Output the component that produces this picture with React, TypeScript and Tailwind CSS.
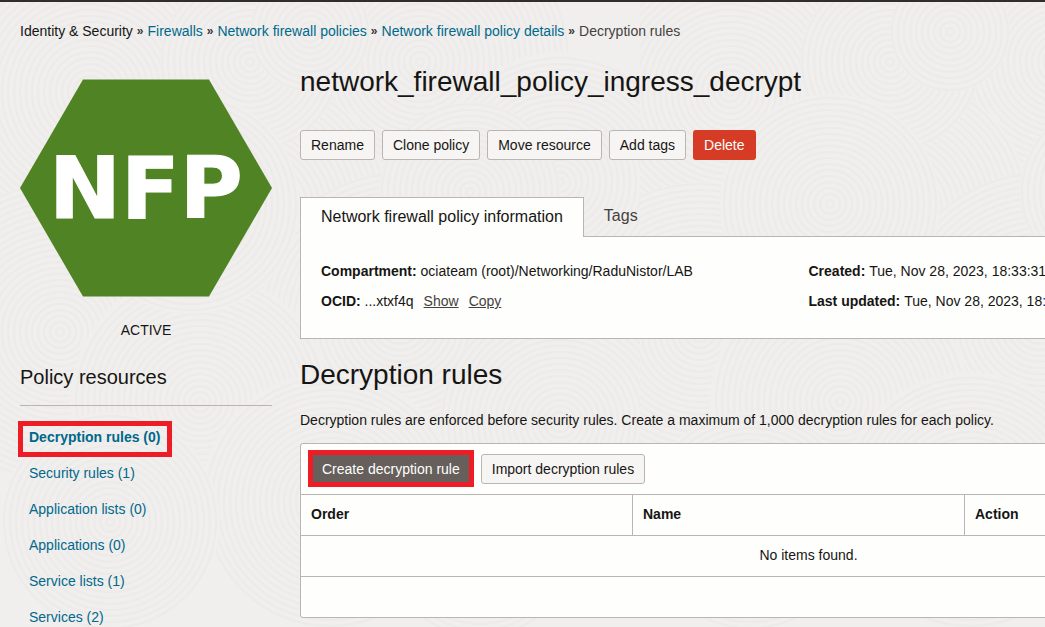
import type { ReactNode } from "react";

const crumbs = ["Firewalls", "Network firewall policies", "Network firewall policy details"];

const resources = [
  { label: "Decryption rules (0)", selected: true },
  { label: "Security rules (1)" },
  { label: "Application lists (0)" },
  { label: "Applications (0)" },
  { label: "Service lists (1)" },
  { label: "Services (2)" },
];

// Ring centres and radii inside one 640px tile; later discs cover earlier ones.
const discs: [number, number, number][] = [
  [90, 90, 150], [420, 60, 150], [250, 210, 140], [560, 180, 130], [60, 330, 150],
  [400, 320, 150], [200, 400, 130], [560, 420, 120], [330, 500, 130], [110, 520, 110],
  [480, 540, 95], [250, 60, 90], [190, 202, 110], [470, 190, 90], [310, 30, 60],
];

const rings = Array.from({ length: 25 }, (_, i) => 4 + i * 6);

function Texture() {
  return (
    <svg className="pointer-events-none absolute inset-0 -z-10 h-full w-full" aria-hidden="true">
      <defs>
        <pattern id="rings" width="640" height="640" patternUnits="userSpaceOnUse">
          <rect width="640" height="640" fill="#f0efed" />
          {discs.map(([cx, cy, r]) => (
            <g key={`${cx}-${cy}`} fill="none" stroke="#ecebe9" strokeWidth="2">
              <circle cx={cx} cy={cy} r={r} fill="#f0efed" stroke="none" />
              {rings
                .filter((radius) => radius < r)
                .map((radius) => (
                  <circle key={radius} cx={cx} cy={cy} r={radius} />
                ))}
            </g>
          ))}
        </pattern>
      </defs>
      <rect width="100%" height="100%" fill="url(#rings)" />
    </svg>
  );
}

function Button({ children }: { children: ReactNode }) {
  return (
    <button
      type="button"
      className="h-[30px] rounded-[3px] border border-[#bab5b0] bg-[#f7f5f4] px-[10px] text-[#161513]"
    >
      {children}
    </button>
  );
}

function Field({ label, children }: { label: string; children: ReactNode }) {
  return (
    <div className="h-[30px] whitespace-nowrap">
      <dt className="inline font-bold">{label}</dt> <dd className="inline">{children}</dd>
    </div>
  );
}

function Separator() {
  return (
    <span aria-hidden="true" className="mx-1 text-xs font-bold leading-5 text-[#3a3734]">
      »
    </span>
  );
}

export default function App() {
  return (
    <div className="relative isolate min-h-screen overflow-x-clip border-t-2 border-[#312d2a] bg-[#f0efed] px-5 pb-[9px] font-['Liberation_Sans',Arial,sans-serif] text-sm leading-5 text-[#161513]">
      <Texture />

      <nav aria-label="Breadcrumb" className="flex pt-[19px]">
        <span>Identity &amp; Security</span>
        <Separator />
        {crumbs.map((crumb) => (
          <span key={crumb} className="flex">
            <a href="#" className="text-[#00688c]">
              {crumb}
            </a>
            <Separator />
          </span>
        ))}
        <span className="text-[#45413e]">Decryption rules</span>
      </nav>

      <div className="flex items-start gap-7">
        <aside className="w-[252px] shrink-0 pt-[38px]">
          <div className="grid place-items-center">
            <svg viewBox="0 0 252 218" className="col-start-1 row-start-1 w-full" aria-hidden="true">
              <path d="M63 .5H189L252 109L189 217.5H63L0 109Z" fill="#4f8323" />
            </svg>
            <span className="col-start-1 row-start-1 font-['DejaVu_Sans',sans-serif] text-[86px] font-bold leading-[88px] text-white [-webkit-text-stroke:1px_white]">
              NFP
            </span>
          </div>
          <p className="pt-[23px] text-center">ACTIVE</p>
          <h2 className="border-b border-[#bab5b0] pb-4 pt-[25px] text-xl leading-6">Policy resources</h2>
          <ul className="pt-[13px]">
            {resources.map(({ label, selected }) => (
              <li key={label} className="relative flex h-9 items-center pl-[9px]">
                <a href="#" className={selected ? "font-bold text-[#00688c]" : "text-[#00688c]"}>
                  {label}
                </a>
                {selected && (
                  <span className="pointer-events-none absolute -left-0.5 top-0.5 h-9 w-[154px] border-[5px] border-[#ee1c25]" />
                )}
              </li>
            ))}
          </ul>
        </aside>

        <main className="min-w-[1017px] flex-1 pt-[25px]">
          <h1 className="text-[28px] leading-8">network_firewall_policy_ingress_decrypt</h1>

          <div className="flex gap-[7px] pt-8">
            <Button>Rename</Button>
            <Button>Clone policy</Button>
            <Button>Move resource</Button>
            <Button>Add tags</Button>
            <button type="button" className="h-[30px] rounded-[3px] bg-[#d63b25] px-[11px] text-white">
              Delete
            </button>
          </div>

          <div role="tablist" className="flex pt-[37px] text-base leading-6">
            <button
              type="button"
              role="tab"
              aria-selected="true"
              className="relative -mb-px h-10 border border-b-0 border-[#bab5b0] bg-[#fefefc] px-5 pb-px"
            >
              Network firewall policy information
            </button>
            <button type="button" role="tab" aria-selected="false" className="h-[38px] px-5 text-[#45413e]">
              Tags
            </button>
          </div>
          <dl className="grid grid-cols-2 border border-[#bab5b0] bg-[#fefefc] px-5 pb-[17px] pt-6">
            <div>
              <Field label="Compartment:">ociateam (root)/Networking/RaduNistor/LAB</Field>
              <Field label="OCID:">
                ...xtxf4q
                <button type="button" className="ml-[10px] text-[#45413e] underline">
                  Show
                </button>
                <button type="button" className="ml-[10px] text-[#45413e] underline">
                  Copy
                </button>
              </Field>
            </div>
            <div>
              <Field label="Created:">Tue, Nov 28, 2023, 18:33:31 UTC</Field>
              <Field label="Last updated:">Tue, Nov 28, 2023, 18:33:31 UTC</Field>
            </div>
          </dl>

          <h2 className="pt-5 text-[28px] leading-8">Decryption rules</h2>
          <p className="pb-[13px] pt-[19px]">
            Decryption rules are enforced before security rules. Create a maximum of 1,000 decryption rules for each
            policy.
          </p>

          <section className="rounded-[3px] border border-[#bab5b0] bg-[#fefefc]">
            <div className="flex items-center gap-[7px] px-[7px] pb-[7px] pt-1.5">
              <button type="button" className="h-[37px] border-[5px] border-[#ee1c25] bg-[#665f5b] px-[9px] text-white">
                Create decryption rule
              </button>
              <Button>Import decryption rules</Button>
            </div>
            <table className="w-full table-fixed border-separate border-spacing-0">
              <thead>
                <tr className="h-[42px] text-left">
                  <th className="w-[332px] border-y border-r border-[#bab5b0] px-[10px] pb-0.5">Order</th>
                  <th className="w-[332px] border-y border-r border-[#bab5b0] px-[10px] pb-0.5">Name</th>
                  <th className="border-y border-[#bab5b0] px-[10px] pb-0.5">Action</th>
                </tr>
              </thead>
              <tbody>
                <tr className="h-[41px]">
                  <td colSpan={3} className="border-b border-[#bab5b0] pb-0.5 text-center">
                    No items found.
                  </td>
                </tr>
              </tbody>
            </table>
            <div className="h-10" />
          </section>
        </main>
      </div>
    </div>
  );
}
